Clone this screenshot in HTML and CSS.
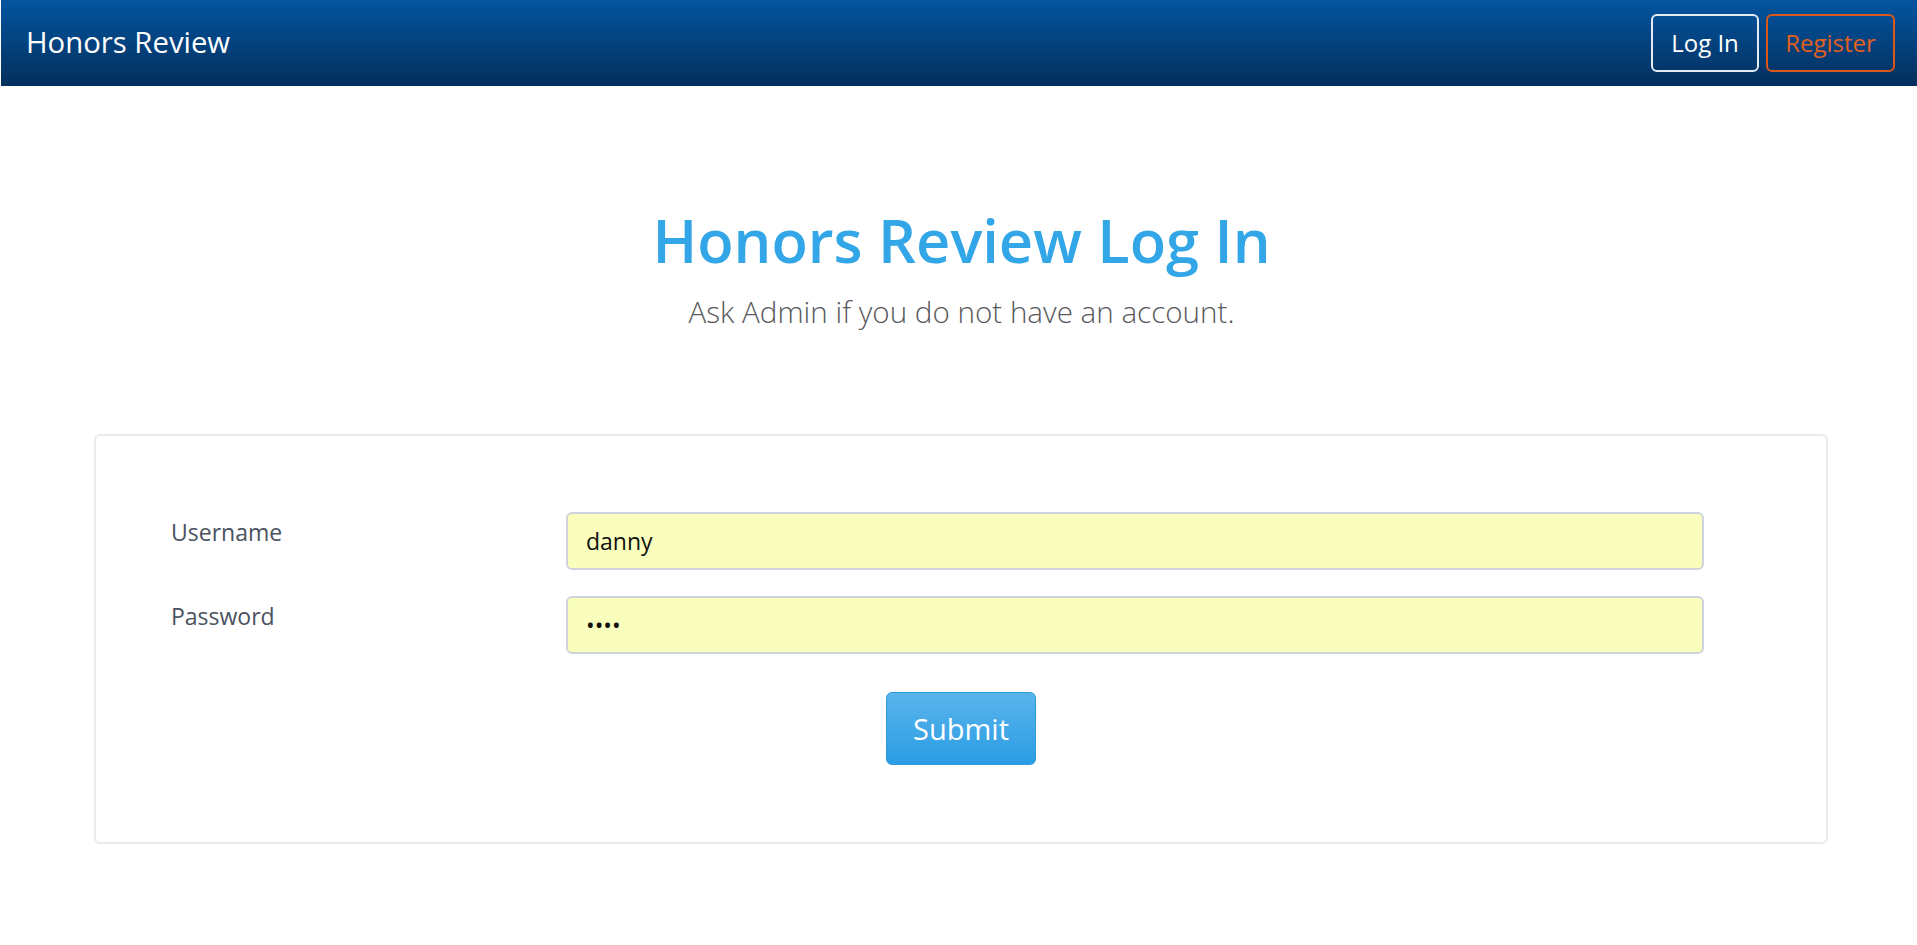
FILE: index.html
```html
<!DOCTYPE html>
<html lang="en">
<head>
<meta charset="utf-8">
<title>Honors Review Log In</title>
<link rel="stylesheet" href="styles.css">
</head>
<body>
<header class="navbar">
  <a class="brand" href="#">Honors Review</a>
  <nav class="nav-actions">
    <a class="nav-btn nav-btn-login" href="#">Log In</a>
    <a class="nav-btn nav-btn-register" href="#">Register</a>
  </nav>
</header>
<main class="page">
  <section class="hero">
    <h1 class="hero-title">Honors Review Log In</h1>
    <p class="hero-lead">Ask Admin if you do not have an account.</p>
  </section>
  <form class="card login-form">
    <div class="form-grid">
      <label class="form-label" for="username">Username</label>
      <input class="form-input" id="username" type="text" value="danny">
      <label class="form-label" for="password">Password</label>
      <input class="form-input" id="password" type="password" value="abcd">
    </div>
    <div class="form-actions">
      <button class="btn-submit" type="button">Submit</button>
    </div>
  </form>
</main>
</body>
</html>
```

FILE: styles.css
```css
* {
  box-sizing: border-box;
}

html, body {
  margin: 0;
  padding: 0;
  background: #ffffff;
}

body {
  font-family: "Open Sans", "Noto Sans", "Liberation Sans", sans-serif;
  color: #212529;
}

.navbar {
  height: 86px;
  margin-left: 1px;
  padding: 0 22px 0 25px;
  display: flex;
  align-items: center;
  justify-content: space-between;
  background: linear-gradient(to bottom, #03549f 0%, #03427f 50%, #032f5d 100%);
}

.brand {
  color: #ffffff;
  text-decoration: none;
  font-size: 29.3px;
  font-weight: 400;
  line-height: 1;
}

.nav-actions {
  display: flex;
  gap: 7px;
  align-items: center;
}

.nav-btn {
  height: 58px;
  display: flex;
  align-items: center;
  justify-content: center;
  border: 2px solid;
  border-radius: 6px;
  font-size: 24px;
  text-decoration: none;
  line-height: 1;
}

.nav-btn-login {
  width: 108px;
  color: #ffffff;
  border-color: #e4ebf3;
}

.nav-btn-register {
  width: 129px;
  color: #e4601d;
  border-color: #dc581a;
}

.page {
  display: flex;
  flex-direction: column;
  align-items: stretch;
}

.hero {
  text-align: center;
  margin-top: 118px;
  padding-left: 6px;
}

.hero-title {
  margin: 0;
  font-size: 59.6px;
  line-height: 1.2;
  font-weight: 600;
  color: #33a6e7;
}

.hero-lead {
  margin: 15px 0 0;
  font-size: 29.6px;
  line-height: 1.45;
  font-weight: 300;
  color: #58595b;
}

.card {
  margin: 101px 89px 0 94px;
  border: 2px solid #e8eaee;
  border-radius: 6px;
  padding: 76px 122px 77px 75px;
}

.form-grid {
  display: grid;
  grid-template-columns: 395px 1fr;
  row-gap: 26px;
}

.form-label {
  font-size: 23px;
  line-height: 1.5;
  color: #4a5260;
  padding-top: 3px;
}

.form-input {
  height: 58px;
  width: 100%;
  border: 2px solid #cfd3db;
  border-radius: 6px;
  background: #fafebd;
  padding: 0 18px;
  font-family: "Open Sans", "Noto Sans", sans-serif;
  font-size: 23px;
  color: #111111;
  outline: none;
}

.form-actions {
  display: flex;
  justify-content: center;
  margin-top: 38px;
  padding-left: 47px;
}

.btn-submit {
  width: 150px;
  height: 73px;
  border: 1px solid #2d98da;
  border-radius: 6px;
  background: linear-gradient(to bottom, #5ab4ec 0%, #2a9de3 100%);
  color: #ffffff;
  font-family: "Open Sans", "Noto Sans", sans-serif;
  font-size: 29px;
  line-height: 1;
  padding: 0;
}
```
